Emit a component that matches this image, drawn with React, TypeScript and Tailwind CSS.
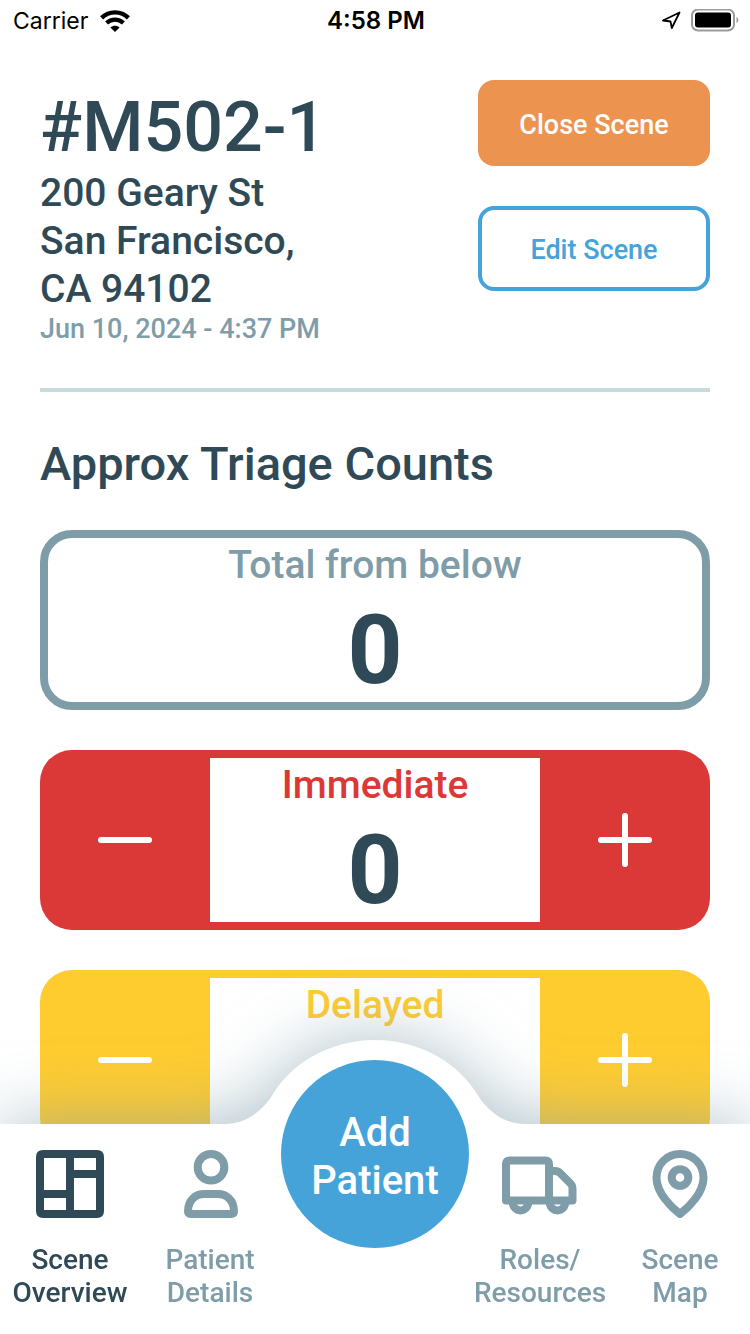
import { useState, type ReactNode } from "react";

function WifiIcon() {
  return (
    <svg viewBox="0 0 30 22" className="h-[22px] w-[30px]" fill="none" stroke="#000" aria-hidden="true">
      <path d="M1.6 7.9C9 0.5 21 0.5 28.4 7.9" strokeWidth="4.4" />
      <path d="M6.6 12.9C11.3 8.4 18.7 8.4 23.4 12.9" strokeWidth="4.2" />
      <path d="M15 22l-4.6-4.6C13 15.2 17 15.2 19.6 17.4z" fill="#000" stroke="none" />
    </svg>
  );
}

function StatusBar() {
  return (
    <div className="grid h-[42px] grid-cols-3 items-center pr-[11px] pl-[13px] font-['Inter',sans-serif] text-black">
      <div className="flex items-center gap-3 text-[23px]">
        <span>Carrier</span>
        <WifiIcon />
      </div>
      <div className="text-center text-2xl font-semibold">4:58 PM</div>
      <div className="flex items-center justify-end gap-2">
        <svg viewBox="0 0 24 22" className="h-[22px] w-6" fill="none" stroke="#000" strokeWidth="1.8" strokeLinejoin="round" aria-hidden="true">
          <path d="M4 10.5L20.500 2.5L12.800 18L11.500 11.500z" />
        </svg>
        <svg viewBox="0 0 48 24" className="h-6 w-12" aria-hidden="true">
          <rect x="1" y="0.5" width="42" height="21" rx="6" fill="none" stroke="#9b9b9b" strokeWidth="2" />
          <rect x="4" y="3.5" width="36" height="15" rx="3" fill="#000" />
          <path d="M45.5 8C48 9 48 13 45.5 14z" fill="#9b9b9b" />
        </svg>
      </div>
    </div>
  );
}

function SceneHeader() {
  return (
    <header className="flex items-start justify-between border-b-4 border-[#c9dadf] pb-[42px]">
      <div className="font-medium">
        <h1 className="mt-[5px] text-[70px] leading-[84px]">#M502-1</h1>
        <address className="text-[39px] leading-12 not-italic">
          200 Geary St
          <br />
          San Francisco,
          <br />
          CA 94102
        </address>
        <p className="text-[27px] leading-[33px] text-[#7f9ca9]">Jun 10, 2024 - 4:37 PM</p>
      </div>
      <div className="flex w-[232px] flex-col gap-10 text-[27px] font-medium">
        <button className="h-[86px] rounded-2xl bg-[#ed9350] pt-1 text-white">Close Scene</button>
        <button className="h-[85px] rounded-2xl border-4 border-[#46a3da] pt-1 text-[#46a3da]">Edit Scene</button>
      </div>
    </header>
  );
}

function CountBody({ label, value, labelClass }: { label: string; value: number; labelClass: string }) {
  return (
    <div className="flex flex-col items-center">
      <div className={`mt-[3px] text-[39px] leading-12 font-medium ${labelClass}`}>{label}</div>
      <output aria-label={label} className="mt-[9px] text-8xl leading-26 font-bold">
        {value}
      </output>
    </div>
  );
}

function StepButton({ label, plus, onClick, className }: { label: string; plus?: boolean; onClick: () => void; className: string }) {
  return (
    <button aria-label={label} onClick={onClick} className={`flex w-[170px] items-center justify-center ${className}`}>
      <svg viewBox="0 0 60 60" className="size-[60px]" fill="none" stroke="#fff" strokeWidth="6" strokeLinecap="round" aria-hidden="true">
        <path d={plus ? "M6 30H54M30 6V54" : "M6 30H54"} />
      </svg>
    </button>
  );
}

const tones = {
  red: { fill: "bg-[#db3838]", border: "border-[#db3838]", text: "text-[#db3838]" },
  yellow: { fill: "bg-[#ffcc30]", border: "border-[#ffcc30]", text: "text-[#ffcc30]" },
};

function Counter({ label, tone }: { label: string; tone: keyof typeof tones }) {
  const [count, setCount] = useState(0);
  const t = tones[tone];
  return (
    <div className="flex items-stretch overflow-hidden rounded-[32px]">
      <StepButton label={`Decrease ${label}`} className={t.fill} onClick={() => setCount(Math.max(0, count - 1))} />
      <div className={`flex-1 border-y-8 bg-white ${t.border}`}>
        <CountBody label={label} value={count} labelClass={t.text} />
      </div>
      <StepButton label={`Increase ${label}`} plus className={t.fill} onClick={() => setCount(count + 1)} />
    </div>
  );
}

function NavItem({ lines, active, children }: { lines: [string, string]; active?: boolean; children: ReactNode }) {
  return (
    <a
      href="#"
      aria-current={active ? "page" : undefined}
      className={`flex flex-col items-center gap-[25px] pt-[26px] pb-[25px] text-center text-[28px] leading-[33px] font-medium ${active ? "text-[#2f4a56]" : "text-[#7f9ca9]"}`}
    >
      <svg viewBox="0 0 80 68" className="h-[68px] w-20" fill="none" stroke="currentColor" strokeWidth="8" strokeLinecap="round" strokeLinejoin="round" aria-hidden="true">
        {children}
      </svg>
      <span>
        {lines[0]}
        <br />
        {lines[1]}
      </span>
    </a>
  );
}

function BottomNav() {
  return (
    <nav className="fixed inset-x-0 bottom-0 font-medium">
      <div className="absolute inset-0 drop-shadow-[0_0_36px_rgba(127,156,169,0.65)]">
        <div className="absolute inset-0 bg-white" />
        <svg viewBox="0 0 300 86" className="absolute -top-[84px] left-1/2 h-[86px] w-[300px] -translate-x-1/2" fill="#fff" aria-hidden="true">
          <path d="M0 84C22 84 38 70 48 54C66 24 104 0 150 0S234 24 252 54C262 70 278 84 300 84V86H0z" />
        </svg>
      </div>
      <div className="relative grid grid-cols-[1fr_1fr_190px_1fr_1fr]">
        <NavItem lines={["Scene", "Overview"]} active>
          <path d="M13 0H67Q74 0 74 7V61Q74 68 67 68H13Q6 68 6 61V7Q6 0 13 0zM14 8V40H36V8zM44 8V20H66V8zM44 28V60H66V28zM14 48V60H36V48z" fill="currentColor" fillRule="evenodd" stroke="none" />
        </NavItem>
        <NavItem lines={["Patient", "Details"]}>
          <circle cx="41" cy="17.3" r="13.3" />
          <path d="M18 61C18 50 26 44 34 44H48C56 44 64 50 64 61Q64 64 61 64H21Q18 64 18 61z" />
        </NavItem>
        <div className="flex justify-center">
          <button className="absolute -top-16 size-[188px] rounded-full bg-[#46a3da] pt-1.5 text-[40px] leading-12 text-white">
            Add
            <br />
            Patient
          </button>
        </div>
        <NavItem lines={["Roles/", "Resources"]}>
          <path d="M6 50.5V14.500Q6 10.500 10 10.500H45Q49 10.500 49 14.500V50.500zM49 21H55Q58 21 60 23L70.500 33.500Q72.500 35.500 72.500 38V50.500H49" />
          <path d="M12.500 51C12.500 63.500 28.500 63.500 28.500 51M49.500 51C49.500 63.500 65.500 63.500 65.500 51" />
        </NavItem>
        <NavItem lines={["Scene", "Map"]}>
          <path d="M40 64C32 58 16.500 43 16.500 28C16.500 14 27 4 40 4S63.500 14 63.500 28C63.500 43 48 58 40 64z" />
          <circle cx="40" cy="27.500" r="8.300" />
        </NavItem>
      </div>
    </nav>
  );
}

export default function App() {
  return (
    <div className="min-h-screen bg-white font-['Roboto',sans-serif] text-[#2f4a56]">
      <StatusBar />
      <main className="px-10 pt-[38px] pb-44">
        <SceneHeader />
        <section>
          <h2 className="pt-[43px] pb-[37px] text-[47px] leading-[58px] font-medium">Approx Triage Counts</h2>
          <div className="flex flex-col gap-10">
            <div className="rounded-[32px] border-8 border-[#7f9ca9]">
              <CountBody label="Total from below" value={0} labelClass="text-[#7f9ca9]" />
            </div>
            <Counter label="Immediate" tone="red" />
            <Counter label="Delayed" tone="yellow" />
          </div>
        </section>
      </main>
      <BottomNav />
    </div>
  );
}
